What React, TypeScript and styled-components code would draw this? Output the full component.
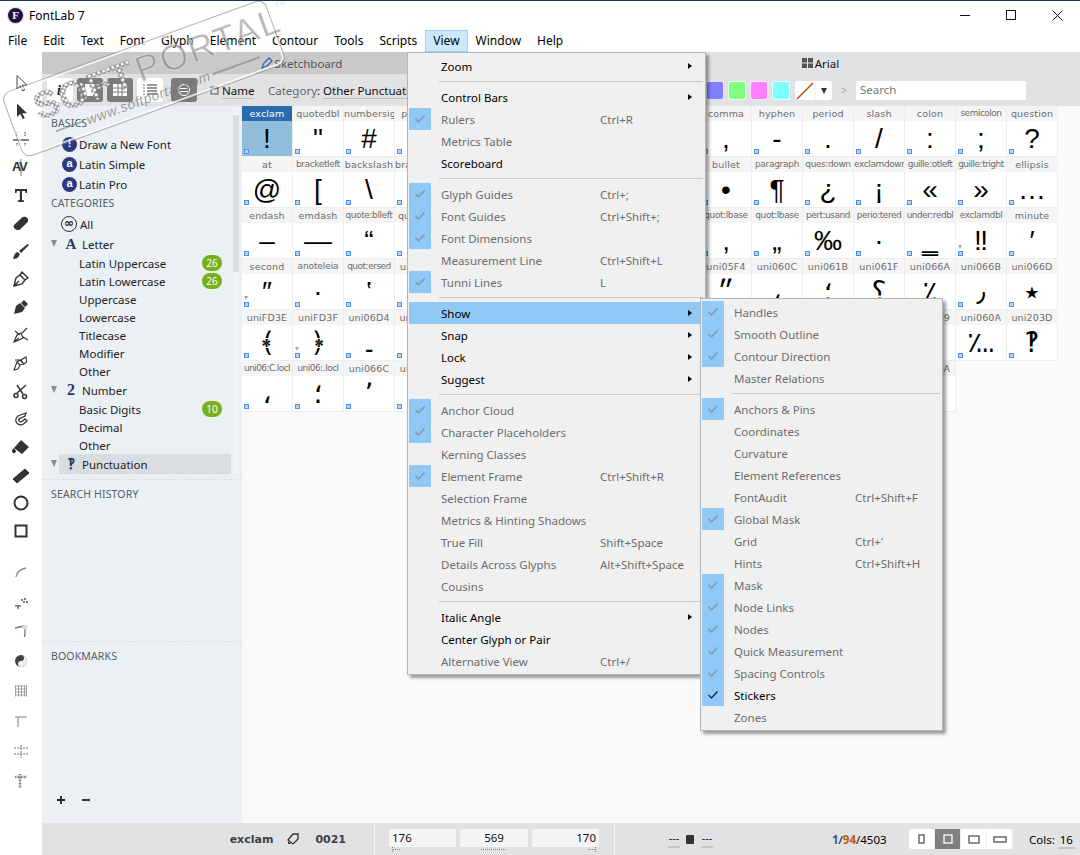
import React from 'react';
import styled, { createGlobalStyle } from 'styled-components';

const UI = `"Noto Sans", "Open Sans", sans-serif`;

const Global = createGlobalStyle`
  html, body { margin: 0; padding: 0; background: #fff; overflow: hidden; }
  * { box-sizing: border-box; }
`;

const Win = styled.div`
  position: relative; width: 1080px; height: 855px; overflow: hidden; background: #fff;
  font-family: ${UI}; font-size: 11.5px; color: #000;
  border-top: 1px solid #17385a; display: flex; flex-direction: column;
`;
const TitleBar = styled.div`height: 29px; display: flex; align-items: center; padding-left: 8px; flex: none;`;
const AppLogo = styled.div`
  width: 15px; height: 15px; border-radius: 50%; background: #1d1245; color: #fff; box-shadow: 0 0 0 1px #d8792b55;
  font: bold 11px/15px "Liberation Serif", serif; text-align: center; margin-right: 6px;
`;
const AppTitle = styled.div`font-size: 12px; flex: 1;`;
const WinBtn = styled.div`width: 46px; height: 29px; display: flex; align-items: center; justify-content: center;`;
const MenuBar = styled.div`height: 22px; display: flex; flex: none; align-items: center;`;
const MenuTitle = styled.div<{ $open?: boolean }>`
  height: 22px; line-height: 22px; padding: 0 8px; font-size: 12px;
  margin-right: ${p => (p.$open ? 0 : 0)}px;
  ${p => p.$open && 'background:#cce8ff; box-shadow: inset 0 0 0 1px #99d1ff;'}
`;
const Main = styled.div`flex: 1; display: flex; min-height: 0;`;
const ToolStrip = styled.div`
  width: 42px; flex: none; padding-top: 17px; display: flex; flex-direction: column; align-items: center; background: #fff;
`;
const Tool = styled.div<{ $tall?: boolean; $gap?: boolean }>`
  height: ${p => (p.$tall ? 30 : 28)}px; width: 42px; display: flex; align-items: center; justify-content: center; flex: none;
  ${p => p.$gap && 'margin-top: 11px;'}
`;
const Work = styled.div`flex: 1; display: flex; flex-direction: column; min-width: 0;`;
const Tabs = styled.div`height: 22px; display: flex; flex: none;`;
const Tab = styled.div<{ $on?: boolean }>`
  flex: 1; display: flex; align-items: center; justify-content: center; gap: 2px; font-size: 11.5px;
  background: ${p => (p.$on ? '#e1e2e4' : '#c9c9c9')}; color: ${p => (p.$on ? '#111' : '#555')};
`;
const TopTools = styled.div`height: 32px; flex: none; background: #e1e2e4; display: flex; align-items: center; padding-left: 5px;`;
const ViewBtn = styled.div<{ $dark?: boolean; $gap?: number }>`
  width: 26px; height: 24px; border-radius: 3px; display: flex; align-items: center; justify-content: center; flex: none;
  margin-right: ${p => p.$gap ?? 4}px;
  background: ${p => (p.$dark ? '#7c7c7c' : '#fff')};
`;
const FieldLabel = styled.span<{ $w: number }>`
  width: ${p => p.$w}px; flex: none; font-size: 11.5px; color: #111; white-space: nowrap;
`;
const Dim = styled.span`color: #666;`;
const Under = styled.span`border-bottom: 1px solid #bbb;`;
const Colon = styled.div`width: 12px; margin-left: 4px; flex: none; color: #555; font-size: 12px; font-weight: 700; text-align: center;`;
const Chip = styled.div<{ $c: string }>`
  width: 18px; height: 19px; border-radius: 3px; background: ${p => p.$c}; margin-right: 4px; flex: none; border: 1px solid #ffffffcc;
`;
const LineBtn = styled.div`
  width: 37px; height: 19px; background: #fff; border-radius: 3px; margin-left: 1px; display: flex; align-items: center; flex: none;
`;
const Chevron = styled.div`width: 24px; text-align: center; color: #aaa; font-size: 12px; flex: none;`;
const SearchBox = styled.div`
  width: 170px; height: 19px; background: #fff; color: #777; line-height: 18px; padding-left: 4px; font-size: 11.5px; flex: none;
`;
const Body = styled.div`flex: 1; display: flex; min-height: 0;`;
const Side = styled.div`width: 200px; flex: none; background: #ebf0f4; display: flex; flex-direction: column; position: relative;`;
const Scrollbar = styled.div`
  position: absolute; left: 191px; top: 2px; width: 6px; height: 366px;
  background: repeating-conic-gradient(#f6f7f8 0 25%, #ebf0f4 0 50%) 0 0 / 2px 2px;
`;
const Thumb = styled.div`width: 6px; height: 157px; margin-top: 7px; background: #dadde2;`;
const SideTree = styled.div`height: 374px; padding-top: 8px; flex: none; border-bottom: 1px dashed #dde1e5;`;
const SectionHead = styled.div`
  height: 18px; line-height: 18px; font-size: 10.5px; color: #555e6c; padding-left: 9px; letter-spacing: .15px; text-transform: uppercase;
`;
const Row = styled.div<{ $h?: number; $mt?: number; $sel?: boolean }>`
  height: ${p => p.$h ?? 20}px; display: flex; align-items: center; position: relative; font-size: 11.5px; color: #222;
  margin-top: ${p => p.$mt ?? 0}px;
`;
const RowFill = styled.div<{ $sel?: boolean }>`
  flex: none; width: 172px; height: 20px; margin-left: 17px; display: flex; align-items: center;
  ${p => p.$sel && 'background:#d9dce1;'}
`;
const Twist = styled.div`
  width: 0; height: 0; border-left: 3.5px solid transparent; border-right: 3.5px solid transparent; border-top: 7px solid #8b8b8b;
  position: absolute; left: 9px; top: 6px;
`;
const RoundIcon = styled.div`
  width: 15px; height: 15px; border-radius: 50%; background: #2b3a80; color: #fff; margin-left: 20px; margin-right: 2px;
  font: bold 11px/13px "Liberation Sans", sans-serif; text-align: center; flex: none;
`;
const AllIcon = styled.div`
  width: 16px; height: 16px; border-radius: 50%; border: 1px solid #333; color: #222; margin-left: 19px; margin-right: 3px;
  font: bold 12px/12px "DejaVu Sans", sans-serif; text-align: center; flex: none;
`;
const CatGlyph = styled.div<{ $size?: number }>`
  width: 16px; flex: none; margin-left: 4px; margin-right: 0; text-align: center; color: #253761;
  font: bold ${p => p.$size ?? 15}px/20px "Liberation Serif", serif;
`;
const SubLabel = styled.div`padding-left: 37px; flex: 1;`;
const Badge = styled.div`
  position: absolute; left: 160px; top: 1px; width: 20px; height: 16px; border-radius: 8px; background: #79b019; color: #fff;
  font-size: 10px; line-height: 16px; text-align: center;
`;
const SearchPanel = styled.div`height: 162px; padding-top: 5px; flex: none; border-bottom: 1px dashed #dde1e5;`;
const BookPanel = styled.div`flex: 1; padding-top: 5px; display: flex; flex-direction: column;`;
const AddBar = styled.div`margin-top: auto; height: 28px; display: flex; align-items: flex-start; padding-left: 14px; gap: 15px;`;
const GridArea = styled.div`flex: 1; background: #fafafa; display: flex; align-items: flex-start; min-width: 0;`;
const Grid = styled.div`display: grid; grid-template-columns: repeat(16, 51px); grid-auto-rows: 51px;`;
const Cell = styled.div<{ $sel?: boolean }>`
  position: relative; border-right: 1px solid #eeeeee; border-bottom: 1px solid #eeeeee;
  background: ${p => (p.$sel ? '#90bedb' : '#fff')}; overflow: hidden;
`;
const CellLabel = styled.div<{ $sel?: boolean; $tight?: number }>`
  height: 15px; line-height: 15px; text-align: center; white-space: nowrap; overflow: hidden;
  font-family: "DejaVu Sans", sans-serif; font-size: ${p => (p.$tight ? 9 : 9.5)}px;
  letter-spacing: ${p => p.$tight ?? 0.15}px;
  background: ${p => (p.$sel ? '#2a6bae' : '#f5f5f5')}; color: ${p => (p.$sel ? '#fff' : '#6c6c6c')};
`;
const CellGlyph = styled.div`
  height: 36px; line-height: 36px; text-align: center; font-family: "Liberation Sans", "DejaVu Sans", sans-serif; font-size: 28px; color: #000;
`;
const Anchor = styled.div`
  position: absolute; left: 2px; bottom: 2px; width: 5px; height: 5px; background: #b9d4f7; border: 1px solid #4f8fec;
`;
const Marker = styled.div`
  position: absolute; left: 2px; bottom: 9px; width: 0; height: 0;
  border-left: 2.5px solid transparent; border-right: 2.5px solid transparent; border-top: 4px solid #aaa;
`;
const Status = styled.div`height: 32px; flex: none; background: #e1e2e4; display: flex; align-items: center; font-size: 11.5px;`;
const NameBlock = styled.div`
  width: 333px; height: 32px; display: flex; align-items: center; justify-content: flex-end; padding-right: 28px; flex: none;
  border-right: 1px solid #f3f3f3; font: bold 11px "DejaVu Sans", sans-serif; color: #3c4048;
`;
const TagWrap = styled.div`margin: 0 16px 0 14px; display: flex;`;
const Metrics = styled.div`
  width: 240px; height: 32px; flex: none; display: flex; gap: 4px; padding: 6px 0 0 14px; border-right: 1px solid #f3f3f3;
`;
const MetricCol = styled.div<{ $w?: number }>`width: ${p => p.$w ?? 67}px; flex: none; display: flex; flex-direction: column;`;
const MetricBox = styled.div<{ $a: string }>`
  height: 18px; background: #f5f5f5; line-height: 18px; padding: 0 3px; text-align: ${p => p.$a}; font-size: 11.5px; color: #111;
`;
const MetricTick = styled.div<{ $a: string }>`
  height: 7px; display: flex; justify-content: ${p => p.$a}; padding: 0 3px;
`;
const Dashes = styled.div`
  width: 12px; flex: none; text-align: center; line-height: 14px; border-bottom: 2px solid #c5c5c5; height: 17px; font-size: 11px; color: #222;
`;
const StatRight = styled.div`flex: 1; display: flex; align-items: center; padding-left: 53px;`;
const KernIcon = styled.div`margin: 0 7px 0 6px; width: 8px; height: 9px; background: #333; border-radius: 1px; flex: none;`;
const Count = styled.div`margin-left: 119px; width: 77px; flex: none; font-size: 11.5px;`;
const CountA = styled.b`color: #22629f;`;
const CountB = styled.b`color: #b95d10;`;
const Seg = styled.div`width: 104px; height: 20px; flex: none; background: #fff; border-radius: 3px; display: flex; overflow: hidden;`;
const SegBtn = styled.div<{ $on?: boolean }>`
  flex: 1; display: flex; align-items: center; justify-content: center;
  ${p => (p.$on ? 'background:#808080;' : '')}
  border-right: 1px solid #eee;
`;
const Cols = styled.div`margin-left: 16px; white-space: nowrap; font-size: 11.5px;`;
const ColsNum = styled.span`border-bottom: 2px solid #c5c5c5; margin-left: 3px; padding: 0 2px;`;

const Popup = styled.div<{ $x: number; $y: number; $w: number }>`
  position: absolute; left: ${p => p.$x}px; top: ${p => p.$y}px; width: ${p => p.$w}px;
  background: #f0f0f0; border: 1px solid #b4b4b4; padding: 2px 1px;
  box-shadow: 3px 3px 3px rgba(0,0,0,.38);
`;
const MRow = styled.div<{ $hot?: boolean; $off?: boolean }>`
  height: 22px; display: flex; align-items: center; font-size: 11.5px; margin: 0;
  color: ${p => (p.$off ? '#6d6d6d' : '#000')};
  background: ${p => (p.$hot ? '#90c8f6' : 'transparent')};
`;
const MCheck = styled.div<{ $on?: boolean }>`
  width: 22px; height: 22px; flex: none; display: flex; align-items: center; justify-content: center;
  background: ${p => (p.$on ? '#90c8f6' : 'transparent')};
`;
const MText = styled.div<{ $w: number }>`width: ${p => p.$w}px; padding-left: 10px; flex: none; white-space: nowrap;`;
const MKey = styled.div`white-space: nowrap;`;
const MArrow = styled.div`
  margin-left: auto; margin-right: 12px; width: 0; height: 0; flex: none;
  border-top: 3.5px solid transparent; border-bottom: 3.5px solid transparent; border-left: 4px solid #000;
`;
const MSep = styled.div<{ $l: number }>`
  height: 9px; margin-left: ${p => p.$l}px; margin-right: 1px; display: flex; align-items: center;
  &::after { content: ''; flex: 1; height: 1px; background: #c9c9c9; }
`;

const Mark = styled.div`
  position: absolute; left: 5px; top: 44px; width: 278px; height: 67px; transform: rotate(-20deg); pointer-events: none;
  border: 2px solid rgba(255,255,255,.75); outline: 1px solid rgba(125,125,125,.6); border-radius: 8px;
`;
const MarkTop = styled.div`display: flex; align-items: flex-end; height: 41px; padding-left: 24px;`;
const MarkSoft = styled.div`
  font: 900 38px/38px "Liberation Sans", sans-serif; letter-spacing: 1px; color: transparent;
  background: radial-gradient(circle, #fff 0 1.3px, #8a8a8a 1.6px 2.2px, transparent 2.4px) 0 0 / 5px 5px;
  -webkit-background-clip: text; background-clip: text; -webkit-text-stroke: .5px rgba(120,120,120,.25);
`;
const MarkPortal = styled.div`
  font: 400 36px/38px "Liberation Sans", sans-serif; letter-spacing: 2px; color: rgba(120,120,120,.55);
  -webkit-text-stroke: .6px rgba(255,255,255,.7); margin-left: 3px;
`;
const MarkTm = styled.span`font-size: 8px; vertical-align: 24px; letter-spacing: 0;`;
const MarkBottom = styled.div`display: flex; align-items: center; height: 20px; padding-left: 36px; gap: 3px;`;
const MarkRule = styled.div<{ $w: number }>`width: ${p => p.$w}px; height: 2px; background: rgba(120,120,120,.55); flex: none;`;
const MarkUrl = styled.div`
  font: italic 14px/18px "Liberation Sans", sans-serif; letter-spacing: .55px; color: rgba(120,120,120,.7); white-space: nowrap;
`;

const S = ({ children, w = 20, h = 20, vb = '0 0 20 20' }: { children: React.ReactNode; w?: number; h?: number; vb?: string }) => (
  <svg width={w} height={h} viewBox={vb} fill="none">{children}</svg>
);
const D = '#333';
const tools1: React.ReactNode[] = [
  <path d="M6 2.5V16l3.3-3 2.4 5 2-1-2.4-4.8H16Z" fill="#fff" stroke="#444" />,
  <path d="M6 2.5V16l3.3-3 2.4 5 2-1-2.4-4.8H16Z" fill="#333" />,
  <g stroke={D}><path d="M2 11h16" strokeWidth="1.2" /><path d="M6 3v5M14 3v5M6 14v3M14 14v3" strokeDasharray="1.5 1" /></g>,
  <g><text x="1" y="14" fontFamily="Liberation Sans" fontWeight="700" fontSize="13" fill="#333" letterSpacing="-1.5">AV</text><path d="M10 2v17" stroke="#555" strokeWidth=".8" /></g>,
  <path d="M4 4h12v4h-1.5l-.5-2h-3v9l2 .6V17H6.800v-1.400l2-.6V6H6l-.5 2H4Z" fill="#333" />,
  <path d="M3 12 11 4.500c1.500-1 4-1 5.300.5s1 3.500-.3 4.800L9 16.500c-2 1-4 .5-5.200-.8S2.200 13.500 3 12Z" fill="#333" />,
  <path d="M2 18c3 0 5-1 6-3l1-2-2.500-2c-2 .5-3.500 3-4.500 7ZM8 10l2 2 8-8-1.500-1Z" fill="#333" />,
  <path d="M3 17l2-8 4-3 5 5-3 4ZM9 6l2-3 6 6-3 2M4 16l4-4" stroke="#333" strokeWidth="1.4" fill="#fff" />,
  <path d="M3 17l2-8 4-3 5 5-3 4ZM10 6l3-3 4 4-3 3" fill="#333" />,
  <path d="M3 17l3-7 4-2 2 5-4 2ZM3 17l5-4M11 8l5-5M9 10 4 6M12 12l5 3" stroke="#333" strokeWidth="1.200" />,
  <path d="M3 17l3-8 3 3-2 4ZM9 12 6 9l3-2 4 4ZM13 11l-3-4 5-3 .5 5ZM4 7h5" stroke="#333" strokeWidth="1.100" fill="#fff" />,
  <g stroke="#333" strokeWidth="1.500"><path d="M6 4l6 9M15 4 6 12" /><circle cx="5" cy="14.500" r="2" /><circle cx="13.500" cy="15.500" r="2" /></g>,
  <path d="M15 4 8 6.500C5 8 4 11 5.500 13.500S10 16.500 12.500 15l3.500-3-2-2-3 2.500c-1 .6-2.500.4-3-.7s-.2-2 .8-2.500l5-2Z" stroke="#333" strokeWidth="1.300" fill="#fff" />,
  <path d="M10 3l8 7-7 7-8-6ZM3 11c-2 1-2.500 3-1.500 4.500S5 16 5 14Z M3 10h14" fill="#333" />,
  <path d="M2 14 14 4l4 4L6 18Z" fill="#333" stroke="#333" />,
  <circle cx="10" cy="10" r="6.500" stroke="#333" strokeWidth="2" />,
  <rect x="4.500" y="4.500" width="11" height="11" stroke="#333" strokeWidth="2" fill="#fff" />,
];
const tools2: React.ReactNode[] = [
  <path d="M5 16c.5-4 3-7.500 10-9" stroke="#888" strokeWidth="1.300" />,
  <g fill="#777"><path d="M4 14h6v1.500H8l-.5 3H6.500l-.5-3H4ZM10 8h2v2h-2ZM13 7h2v2h-2ZM12 10h2v2h-2ZM15 10h2v2h-2Z" /></g>,
  <g stroke="#777" strokeWidth="1.300"><path d="M4 7l9-2M13 5c1.500 3 1 8 .5 11" /><circle cx="14" cy="6" r="2.500" stroke="none" fill="#ddd" /></g>,
  <g><circle cx="10" cy="10" r="6" fill="#444" /><path d="M10 4a6 6 0 0 1 0 12 3 3 0 0 1 0-6 3 3 0 0 0 0-6Z" fill="#eee" /></g>,
  <path d="M4.500 4.500v11M7.500 4.500v11M10.500 4.500v11M13.500 4.500v11M15.500 4.500v11M4 5h12M8 4M4 8h12M4 11h12M4 14h12" stroke="#999" strokeWidth=".9" />,
  <path d="M4 6h12M7 6v10" stroke="#aaa" strokeWidth="1.600" />,
  <path d="M3 7h14M3 13h14M10 4v13" stroke="#777" strokeDasharray="2 1" />,
  <path d="M4 6h12M9 3v14" stroke="#888" strokeWidth="2.500" strokeDasharray="1 .5" />,
];

const cols16 = [
  ['exclam','!'],['quotedbl','"'],['numbersign','#',.0],['percent','%'],['ampersand','&'],['quotesingle',"'"],['parenleft','('],['parenright',')'],['asterisk','*'],['comma',','],['hyphen','-'],['period','.'],['slash','/'],['colon',':'],['semicolon',';',-.5],['question','?'],
  ['at','@'],['bracketleft','[',-.4],['backslash','\\'],['bracketright',']'],['underscore','_'],['braceleft','{'],['bar','|'],['braceright','}'],['periodcentered','·'],['bullet','•'],['paragraph','¶',-.3],['ques:down','¿',-.4],['exclamdown','¡',-.4],['guille:otleft','«',-.5],['guille:tright','»',-.5],['ellipsis','…'],
  ['endash','–'],['emdash','—'],['quote:blleft','“',-.4],['quoteleft','‘'],['quoteright','’'],['quotedblright','”'],['dagger','†'],['daggerdbl','‡'],['section','§'],['quot:lbase','‚',-.4],['quot:lbase','„',-.4],['pert:usand','‰',-.5],['perio:tered','·',-.5],['under:redbl','‗',-.5],['exclamdbl','‼',-.4],['minute','′'],
  ['second','″'],['anoteleia','·',-.1],['quot:ersed','‛',-.5],['uni0589','։'],['uni05C3','׃'],['uni05C0','׀'],['uni05F3','׳'],['uni0387','·'],['uni05BE','־'],['uni05F4','״'],['uni060C','،'],['uni061B','؛'],['uni061F','؟'],['uni066A','٪'],['uni066B','٫'],['uni066D','٭'],
  ['uniFD3E','﴾'],['uniFD3F','﴿'],['uni06D4','۔'],['uni060D','؍'],['uni2030','‰'],['uni0600','؀'],['uni0601','؁'],['uni0602','؂'],['uni0603','؃'],['uni0604','؄'],['uni0605','؅'],['uni0606','؆'],['uni0607','؇'],['uni0609','؉'],['uni060A','؊'],['uni203D','‽'],
  ['uni06:C.locl','،',-.6],['uni06:.locl','؛',-.5],['uni066C','٬'],['uni066B','٫'],['uni066A','٪'],['uni061F','؟'],['uni061B','؛'],['uni060C','،'],['uni06D4','۔'],['uni0608','؈'],['uni0607','؇'],['uni0606','؆'],['uni0605','؅'],['uni060A','؊'],
] as [string, string, number?][];
const marked = new Set(['second', 'uniFD3F', 'exclamdbl']);

type MI = { t?: string; k?: string; on?: boolean; off?: boolean; arrow?: boolean; hot?: boolean; sep?: boolean };
const viewMenu: MI[] = [
  { t: 'Zoom', arrow: true }, { sep: true },
  { t: 'Control Bars', arrow: true }, { t: 'Rulers', k: 'Ctrl+R', on: true, off: true }, { t: 'Metrics Table', off: true }, { t: 'Scoreboard' }, { sep: true },
  { t: 'Glyph Guides', k: 'Ctrl+;', on: true, off: true }, { t: 'Font Guides', k: 'Ctrl+Shift+;', on: true, off: true }, { t: 'Font Dimensions', on: true, off: true },
  { t: 'Measurement Line', k: 'Ctrl+Shift+L', off: true }, { t: 'Tunni Lines', k: 'L', on: true, off: true }, { sep: true },
  { t: 'Show', arrow: true, hot: true }, { t: 'Snap', arrow: true }, { t: 'Lock', arrow: true }, { t: 'Suggest', arrow: true }, { sep: true },
  { t: 'Anchor Cloud', on: true, off: true }, { t: 'Character Placeholders', on: true, off: true }, { t: 'Kerning Classes', off: true },
  { t: 'Element Frame', k: 'Ctrl+Shift+R', on: true, off: true }, { t: 'Selection Frame', off: true }, { t: 'Metrics & Hinting Shadows', off: true },
  { t: 'True Fill', k: 'Shift+Space', off: true }, { t: 'Details Across Glyphs', k: 'Alt+Shift+Space', off: true }, { t: 'Cousins', off: true }, { sep: true },
  { t: 'Italic Angle', arrow: true }, { t: 'Center Glyph or Pair' }, { t: 'Alternative View', k: 'Ctrl+/', off: true },
];
const showMenu: MI[] = [
  { t: 'Handles', on: true, off: true }, { t: 'Smooth Outline', on: true, off: true }, { t: 'Contour Direction', on: true, off: true }, { t: 'Master Relations', off: true }, { sep: true },
  { t: 'Anchors & Pins', on: true, off: true }, { t: 'Coordinates', off: true }, { t: 'Curvature', off: true }, { t: 'Element References', off: true },
  { t: 'FontAudit', k: 'Ctrl+Shift+F', off: true }, { t: 'Global Mask', on: true, off: true }, { t: 'Grid', k: "Ctrl+'", off: true }, { t: 'Hints', k: 'Ctrl+Shift+H', off: true },
  { t: 'Mask', on: true, off: true }, { t: 'Node Links', on: true, off: true }, { t: 'Nodes', on: true, off: true }, { t: 'Quick Measurement', on: true, off: true },
  { t: 'Spacing Controls', on: true, off: true }, { t: 'Stickers', on: true }, { t: 'Zones', off: true },
];

const Tick = ({ dark }: { dark?: boolean }) => (
  <svg width="12" height="10" viewBox="0 0 12 10" fill="none"><path d="M1.500 5 4.500 8 10.500 1.500" stroke={dark ? '#10304f' : '#7f98ae'} strokeWidth="1.500" /></svg>
);

const MenuList = ({ items, textW, sepL }: { items: MI[]; textW: number; sepL: number }) => (
  <>
    {items.map((m, i) =>
      m.sep ? <MSep key={i} $l={sepL} /> : (
        <MRow key={i} $hot={m.hot} $off={m.off}>
          <MCheck $on={m.on}>{m.on && <Tick dark={!m.off} />}</MCheck>
          <MText $w={textW}>{m.t}</MText>
          {m.k && <MKey>{m.k}</MKey>}
          {m.arrow && <MArrow />}
        </MRow>
      )
    )}
  </>
);

const SegIcon = ({ w, h, c }: { w: number; h: number; c: string }) => (
  <svg width={w + 2} height={h + 2}><rect x="1" y="1" width={w} height={h} fill="none" stroke={c} strokeWidth="1.300" /></svg>
);

export default function App() {
  return (
    <Win>
      <Global />
      <TitleBar>
        <AppLogo>F</AppLogo>
        <AppTitle>FontLab 7</AppTitle>
        <WinBtn><svg width="11" height="11"><path d="M0 5.500h10" stroke="#111" /></svg></WinBtn>
        <WinBtn><svg width="11" height="11"><rect x=".5" y=".5" width="9" height="9" fill="none" stroke="#111" /></svg></WinBtn>
        <WinBtn><svg width="11" height="11"><path d="M.5.500l10 10M10.500.500l-10 10" stroke="#111" /></svg></WinBtn>
      </TitleBar>
      <MenuBar>
        {['File','Edit','Text','Font','Glyph','Element','Contour','Tools','Scripts'].map(m => <MenuTitle key={m}>{m}</MenuTitle>)}
        <MenuTitle $open>View</MenuTitle>
        <MenuTitle>Window</MenuTitle>
        <MenuTitle>Help</MenuTitle>
      </MenuBar>
      <Main>
        <ToolStrip>
          {tools1.map((t, i) => <Tool key={i}><S>{t}</S></Tool>)}
          {tools2.map((t, i) => <Tool key={i} $tall $gap={i === 0}><S>{t}</S></Tool>)}
        </ToolStrip>
        <Work>
          <Tabs>
            <Tab>
              <svg width="12" height="12" viewBox="0 0 12 12"><path d="M1 11l2-5 5-5 3 3-5 5Z" fill="none" stroke="#2a6bae" strokeWidth="1.300" /></svg>
              Sketchboard
            </Tab>
            <Tab $on>
              <svg width="11" height="10" viewBox="0 0 11 10"><path d="M0 0h5v4.500H0ZM6 0h5v4.500H6ZM0 5.500h5V10H0ZM6 5.500h5V10H6Z" fill="#555" /></svg>
              Arial
            </Tab>
          </Tabs>
          <TopTools>
            <ViewBtn><svg width="12" height="14"><text x="3" y="12" fontFamily="Liberation Serif" fontWeight="700" fontStyle="italic" fontSize="14" fill="#111">i</text></svg></ViewBtn>
            <ViewBtn $dark><svg width="14" height="14"><rect x="2" y="1" width="10" height="12" fill="#fff" /></svg></ViewBtn>
            <ViewBtn $dark><svg width="14" height="12"><path d="M0 0h14v12H0Z" fill="#fff" /><path d="M0 4h14M0 8h14M5 0v12M9 0v12" stroke="#7c7c7c" /></svg></ViewBtn>
            <ViewBtn $gap={8}><svg width="14" height="12"><path d="M0 1h2M0 4h2M0 7h2M0 10h2" stroke="#777" /><path d="M4 1h10M4 4h10M4 7h10M4 10h10" stroke="#333" /></svg></ViewBtn>
            <ViewBtn $dark $gap={13}><svg width="14" height="14"><circle cx="7" cy="7" r="5.500" fill="none" stroke="#fff" /><path d="M3 5.500h8M3 8.500h8" stroke="#fff" /></svg></ViewBtn>
            <svg width="10" height="9" style={{ marginRight: 2, flex: 'none' }}><rect x="1" y="1" width="7" height="7" fill="none" stroke="#555" /><path d="M1 2h7" stroke="#555" strokeWidth="2" /></svg>
            <FieldLabel $w={46}><Under>Name</Under></FieldLabel>
            <FieldLabel $w={400}><Dim>Category</Dim>: <Under>Other Punctuation</Under></FieldLabel>
            <Colon>:</Colon>
            {['#ff8080', '#8080ff', '#80ff80', '#ff80ff', '#80ffff'].map(c => <Chip key={c} $c={c} />)}
            <LineBtn>
              <svg width="37" height="19" viewBox="0 0 37 19"><path d="M2 18 18 2" stroke="#bf4d0c" strokeWidth="1.600" /><path d="M20 0v19" stroke="#eee" /><path d="M26 7h6l-3 6Z" fill="#333" /></svg>
            </LineBtn>
            <Chevron>&gt;</Chevron>
            <SearchBox>Search</SearchBox>
          </TopTools>
          <Body>
            <Side>
              <Scrollbar><Thumb /></Scrollbar>
              <SideTree>
                <SectionHead>Basics</SectionHead>
                <Row $mt={2}><RoundIcon>!</RoundIcon>Draw a New Font</Row>
                <Row><RoundIcon>a</RoundIcon>Latin Simple</Row>
                <Row><RoundIcon>a</RoundIcon>Latin Pro</Row>
                <SectionHead>Categories</SectionHead>
                <Row $mt={2}><AllIcon>∞</AllIcon>All</Row>
                <Row><Twist /><RowFill><CatGlyph>A</CatGlyph>&nbsp;Letter</RowFill></Row>
                <Row $h={18}><SubLabel>Latin Uppercase</SubLabel><Badge>26</Badge></Row>
                <Row $h={18}><SubLabel>Latin Lowercase</SubLabel><Badge>26</Badge></Row>
                <Row $h={18}><SubLabel>Uppercase</SubLabel></Row>
                <Row $h={18}><SubLabel>Lowercase</SubLabel></Row>
                <Row $h={18}><SubLabel>Titlecase</SubLabel></Row>
                <Row $h={18}><SubLabel>Modifier</SubLabel></Row>
                <Row $h={18}><SubLabel>Other</SubLabel></Row>
                <Row><Twist /><RowFill><CatGlyph $size={16}>2</CatGlyph>&nbsp;Number</RowFill></Row>
                <Row $h={18}><SubLabel>Basic Digits</SubLabel><Badge>10</Badge></Row>
                <Row $h={18}><SubLabel>Decimal</SubLabel></Row>
                <Row $h={18}><SubLabel>Other</SubLabel></Row>
                <Row><Twist /><RowFill $sel><CatGlyph>‽</CatGlyph>&nbsp;Punctuation</RowFill></Row>
              </SideTree>
              <SearchPanel><SectionHead>Search History</SectionHead></SearchPanel>
              <BookPanel>
                <SectionHead>Bookmarks</SectionHead>
                <AddBar>
                  <svg width="10" height="10"><path d="M5 1v8M1 5h8" stroke="#222" strokeWidth="1.800" /></svg>
                  <svg width="10" height="10"><path d="M1 5h8" stroke="#222" strokeWidth="1.800" /></svg>
                </AddBar>
              </BookPanel>
            </Side>
            <GridArea>
              <Grid>
                {cols16.map(([n, g, t], i) => (
                  <Cell key={i} $sel={i === 0}>
                    <CellLabel $sel={i === 0} $tight={t || undefined}>{n}</CellLabel>
                    <CellGlyph>{g}</CellGlyph>
                    <Anchor />
                    {marked.has(n) && <Marker />}
                  </Cell>
                ))}
              </Grid>
            </GridArea>
          </Body>
          <Status>
            <NameBlock>
              exclam
              <TagWrap><svg width="12" height="12" viewBox="0 0 12 12"><path d="M1 7 6 1h5v5l-5 5Z" fill="none" stroke="#333" strokeWidth="1.300" /><path d="M1 8l3 3-3 0Z" fill="#333" /></svg></TagWrap>
              0021
            </NameBlock>
            <Metrics>
              <MetricCol><MetricBox $a="left">176</MetricBox><MetricTick $a="flex-start"><svg width="9" height="5"><path d="M.5 0v5M1 2.500h7" stroke="#888" strokeDasharray="1 1" /></svg></MetricTick></MetricCol>
              <MetricCol $w={68}><MetricBox $a="center">569</MetricBox><MetricTick $a="center"><svg width="28" height="5"><path d="M1 2.500h26" stroke="#888" strokeDasharray="1 1" /></svg></MetricTick></MetricCol>
              <MetricCol><MetricBox $a="right">170</MetricBox><MetricTick $a="flex-end"><svg width="9" height="5"><path d="M8.500 0v5M1 2.500h7" stroke="#888" strokeDasharray="1 1" /></svg></MetricTick></MetricCol>
            </Metrics>
            <StatRight>
              <Dashes>---</Dashes><KernIcon /><Dashes>---</Dashes>
              <Count><CountA>1</CountA>/<CountB>94</CountB>/4503</Count>
              <Seg>
                <SegBtn><SegIcon w={5} h={8} c="#555" /></SegBtn>
                <SegBtn $on><SegIcon w={8} h={8} c="#fff" /></SegBtn>
                <SegBtn><SegIcon w={10} h={7} c="#555" /></SegBtn>
                <SegBtn><SegIcon w={12} h={5} c="#555" /></SegBtn>
              </Seg>
              <Cols>Cols:<ColsNum>16</ColsNum></Cols>
            </StatRight>
          </Status>
        </Work>
      </Main>

      <Popup $x={407} $y={51} $w={299}>
        <MenuList items={viewMenu} textW={169} sepL={30} />
      </Popup>
      <Popup $x={700} $y={297} $w={243}>
        <MenuList items={showMenu} textW={131} sepL={30} />
      </Popup>

      <Mark>
        <MarkTop>
          <MarkSoft>SOFT</MarkSoft>
          <MarkPortal>PORTAL<MarkTm>TM</MarkTm></MarkPortal>
        </MarkTop>
        <MarkBottom>
          <MarkRule $w={30} />
          <MarkUrl>www.softportal.com</MarkUrl>
          <MarkRule $w={50} />
        </MarkBottom>
      </Mark>
    </Win>
  );
}
